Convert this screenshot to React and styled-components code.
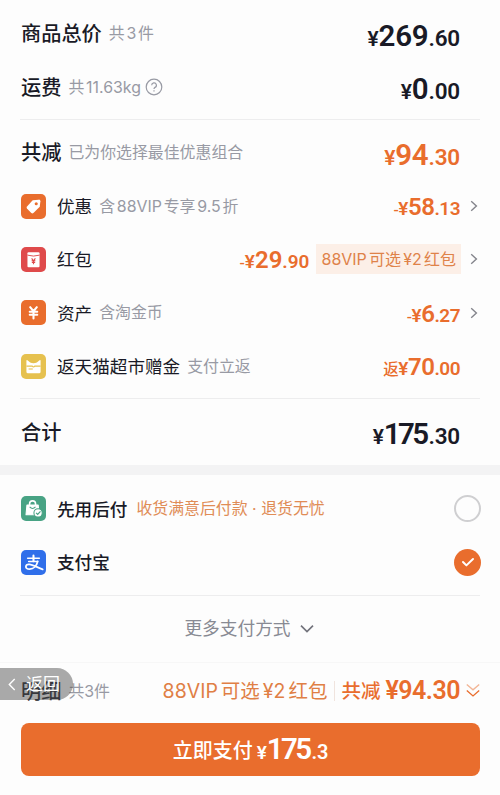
import styled, { createGlobalStyle } from 'styled-components';

const orange = '#e96d2d';
const ink = '#191a26';
const muted = '#989aa4';

const Money = ({ prefix, symbol = '¥', int, dec, ...rest }) => (
  <Price {...rest}>
    {prefix && <Prefix>{prefix}</Prefix>}
    <Yen>{symbol}</Yen>
    <Int>{int}</Int>
    <Dec>.{dec}</Dec>
  </Price>
);

const Chevron = () => (
  <ChevronSlot>
    <svg width="8" height="12" viewBox="0 0 8 12" fill="none" stroke="#83848b" strokeWidth="1.4">
      <path d="M1.2 1.3 6.4 6 1.2 10.7" />
    </svg>
  </ChevronSlot>
);

const TagIcon = () => (
  <svg viewBox="0 0 24 24">
    <path
      d="M11.2 6.1 17 5.4Q18.7 5.3 18.6 7L18 12.2 11.9 18.3Q10.9 19.1 9.9 18.2L5.7 14Q4.9 13 5.8 12Z"
      fill="#fff"
    />
    <circle cx="14.6" cy="9.4" r="1.5" fill={orange} />
  </svg>
);

const PacketIcon = () => (
  <svg viewBox="0 0 24 24">
    <rect x="6.2" y="5" width="11.6" height="14.4" rx="1" fill="#fff" />
    <path d="M6.2 7.8Q12 9.6 17.8 7.8" fill="none" stroke="#df4a4b" strokeWidth=".9" />
    <path d="m10.2 11 1.8 2.2 1.8-2.2M10.2 13.2h3.6M10.4 14.8h3.2M12 13v3.6" fill="none" stroke="#df4a4b" strokeWidth="1.1" />
  </svg>
);

const CoinIcon = () => (
  <svg viewBox="0 0 24 24" fill="none" stroke="#fff" strokeWidth="2" strokeLinecap="round">
    <path d="m8.8 6.9 3.2 3.9 3.2-3.9M8.4 11.2h7.2M8.4 14.2h7.2M12 11v6.8" />
  </svg>
);

const CatCardIcon = () => (
  <svg viewBox="0 0 24 24">
    <path
      d="M5.2 6.3Q5.3 5.4 6.2 5.9L8.8 8.2Q12 9.4 15.2 8.2L17.8 5.9Q18.7 5.4 18.8 6.3V17Q18.8 18.5 17.3 18.5H6.7Q5.2 18.5 5.2 17Z"
      fill="#fff"
    />
    <path d="M5.2 11.6h5.6q1.2 1.4 2.4 0h5.6" fill="none" stroke="#e6c14f" strokeWidth="1.1" />
    <path d="M7.3 14.4h4" stroke="#e6c14f" strokeWidth="1" />
  </svg>
);

const BagIcon = () => (
  <svg viewBox="0 0 24 24" fill="none">
    <path d="M8.2 9.5V7.6a2.9 2.9 0 0 1 5.8 0v1.9" stroke="#fff" strokeWidth="1.5" />
    <path d="M5.7 8.6h10.8l1 9.4H4.8Z" fill="#fff" stroke="#fff" strokeLinejoin="round" />
    <path d="M8.3 10.4q2.8 3 5.6 0" stroke="#48a384" strokeWidth="1" />
    <circle cx="16.4" cy="16.2" r="4" fill="#fff" stroke="#48a384" strokeWidth="1" />
    <path d="m14.5 16.2 1.5 1.5 2.7-2.9" stroke="#48a384" strokeWidth="1.2" />
  </svg>
);

const AlipayIcon = () => (
  <svg viewBox="0 0 24 24" fill="none" stroke="#fff" strokeLinecap="round">
    <path d="M6.4 8h11.2M7.4 11h8.6" strokeWidth="1.5" />
    <path d="M12 5.4v5.4" strokeWidth="2" />
    <path
      d="M16 11C15 15.2 12 18.4 8.3 18.4 5.7 18.4 4.6 17.2 4.7 15.9 4.8 14.5 6.2 13.7 8 13.8 11.3 14 15.8 16.9 20.8 18.6"
      strokeWidth="1.7"
    />
  </svg>
);

const discounts = [
  { icon: <TagIcon />, color: orange, name: '优惠', note: '含 88VIP 专享 9.5 折', prefix: '-', int: '58', dec: '13', arrow: true },
  { icon: <PacketIcon />, color: '#df4a4b', name: '红包', prefix: '-', int: '29', dec: '90', badge: '88VIP 可选 ¥2 红包', arrow: true },
  { icon: <CoinIcon />, color: orange, name: '资产', note: '含淘金币', prefix: '-', int: '6', dec: '27', arrow: true },
  { icon: <CatCardIcon />, color: '#e6c14f', name: '返天猫超市赠金', note: '支付立返', prefix: '返', int: '70', dec: '00' }
];

export default () => (
  <>
    <GlobalStyle />
    <Page>
      <Totals>
        <Row>
          <Title>商品总价</Title>
          <Note>共 3 件</Note>
          <Money int="269" dec="60" />
        </Row>
        <Row>
          <Title>运费</Title>
          <Note>共 11.63kg</Note>
          <Help viewBox="0 0 18 18">
            <circle cx="9" cy="9" r="7.8" />
            <path d="M6.7 7.3a2.35 2.35 0 1 1 3.3 2.1q-1 .5-1 1.7M9 12.3v1.2" />
          </Help>
          <Money int="0" dec="00" />
        </Row>
      </Totals>
      <Rule />
      <Savings>
        <Row>
          <Title>共减</Title>
          <Note>已为你选择最佳优惠组合</Note>
          <Money int="94" dec="30" $accent />
        </Row>
        {discounts.map(item => (
          <Row key={item.name}>
            <IconTile $color={item.color}>{item.icon}</IconTile>
            <Name>{item.name}</Name>
            {item.note && <Note>{item.note}</Note>}
            <Money prefix={item.prefix} int={item.int} dec={item.dec} $accent $small $inset={item.badge} />
            {item.badge && <Badge>{item.badge}</Badge>}
            {item.arrow && <Chevron />}
          </Row>
        ))}
      </Savings>
      <Rule />
      <Sum>
        <Title>合计</Title>
        <Money int="175" dec="30" $tight />
      </Sum>
      <Band />
      <Methods>
        <Row>
          <IconTile $color="#48a384">
            <BagIcon />
          </IconTile>
          <Name $strong>先用后付</Name>
          <Note $accent>收货满意后付款 · 退货无忧</Note>
          <Radio />
        </Row>
        <Row>
          <IconTile $color="#306fea">
            <AlipayIcon />
          </IconTile>
          <Name $strong>支付宝</Name>
          <Radio $checked>
            <svg width="14" height="12" viewBox="0 0 14 12" fill="none" stroke="#fff" strokeWidth="2" strokeLinecap="round" strokeLinejoin="round">
              <path d="m2 6 3.4 3.4L12 3" />
            </svg>
          </Radio>
        </Row>
      </Methods>
      <Rule />
      <More>
        更多支付方式
        <svg width="14" height="10" viewBox="0 0 14 10" fill="none" stroke="#72737c" strokeWidth="1.7">
          <path d="m1 1.7 6 5.8 6-5.8" />
        </svg>
      </More>
      <Rule $wide />
      <Footer>
        <Title>明细</Title>
        <Note>共3件</Note>
        <Offer>88VIP 可选 ¥2 红包</Offer>
        <Saved>
          共减<SavedPrice>¥94.30</SavedPrice>
        </Saved>
        <svg width="14" height="16" viewBox="0 0 14 16" fill="none" stroke={orange} strokeWidth="1.3">
          <path d="m.8 1.4 6.2 5.4 6.2-5.4" opacity=".5" />
          <path d="m.8 7.6 6.2 5.4 6.2-5.4" />
        </svg>
        <Back>
          <svg width="8" height="13" viewBox="0 0 8 13" fill="none" stroke="#fff" strokeWidth="1.4">
            <path d="M6.7 1 1.3 6.5 6.7 12" />
          </svg>
          返回
        </Back>
      </Footer>
      <PayButton>
        立即支付
        <Money int="175" dec="3" $inButton />
      </PayButton>
    </Page>
  </>
);

const GlobalStyle = createGlobalStyle`
  body {
    margin: 0;
    background: #fdfdfd;
  }

  * {
    box-sizing: border-box;
  }
`;

const Page = styled.div`
  width: 500px;
  height: 795px;
  overflow: hidden;
  color: ${ink};
  font-family: Inter, 'Noto Sans CJK SC', sans-serif;
  white-space: nowrap;

  svg {
    flex: none;
  }
`;

const Row = styled.div`
  display: flex;
  align-items: center;
  height: 53.4px;
  padding: 0 20px 0 21px;
`;

const Totals = styled.div`
  height: 119px;
  padding-top: 7px;
`;

const Savings = styled.div`
  height: 278px;
  padding-top: 6px;
`;

const Sum = styled(Row)`
  height: 66px;
`;

const Methods = styled.div`
  height: 120px;
  padding-top: 7px;
`;

const Rule = styled.div`
  height: 1px;
  margin: 0 ${props => (props.$wide ? 0 : 20)}px;
  background: ${props => (props.$wide ? '#f7f7f7' : '#ededee')};
`;

const Band = styled.div`
  height: 10px;
  background: #f3f3f4;
`;

const Title = styled.div`
  padding-top: 1px;
  font-size: 20.2px;
  font-weight: 500;
  line-height: 28px;
`;

const Name = styled.div`
  margin-left: 11px;
  padding-top: 2px;
  font-size: 17.6px;
  font-weight: ${props => (props.$strong ? 500 : 400)};
  line-height: 26px;
`;

const Note = styled.div`
  margin-left: ${props => (props.$accent ? 9 : 7)}px;
  padding-top: 1px;
  color: ${props => (props.$accent ? '#e08c56' : muted)};
  font-size: 15.9px;
  line-height: 24px;
  word-spacing: ${props => (props.$accent ? 0 : -2.7)}px;
`;

const Help = styled.svg`
  width: 18px;
  height: 18px;
  margin-left: 4px;
  fill: none;
  stroke: ${muted};
  stroke-width: 1.2;
`;

const IconTile = styled.div`
  display: flex;
  flex: none;
  width: 25px;
  height: 25px;
  border-radius: 5px;
  background: ${props => props.$color};

  svg {
    width: 25px;
    height: 25px;
  }
`;

const Yen = styled.span`
  font-size: 21px;
`;

const Int = styled.span`
  font-size: 29.5px;
`;

const Dec = styled.span`
  font-size: 22.5px;
`;

const Prefix = styled.span`
  font-size: 20px;
`;

const Price = styled.div`
  display: flex;
  align-items: baseline;
  margin-left: auto;
  margin-right: 20px;
  padding-top: 7px;
  color: ${props => (props.$accent ? orange : ink)};
  font-family: Roboto, 'Noto Sans CJK SC', sans-serif;
  font-weight: 600;
  line-height: 34px;
  letter-spacing: -0.2px;

  ${props => props.$tight && `${Int} { letter-spacing: -2.6px; margin-right: 2px; }`}

  ${props =>
    props.$small &&
    `
    padding-top: 5px;
    letter-spacing: -0.5px;

    ${Yen} { font-size: 19px; }
    ${Int} { font-size: 24px; }
    ${Dec} { font-size: 19px; }
    ${Prefix} { font-size: 15.5px; font-weight: 500; }
  `}

  ${props => props.$inset && `margin-right: 7px; letter-spacing: 0;`}

  ${props =>
    props.$inButton &&
    `
    margin: 0 0 0 4px;
    padding: 2px 0 0;
    color: #fff;

    ${Yen} { font-size: 19px; }
    ${Int} { font-size: 29.5px; letter-spacing: -2.6px; margin-right: 2px; }
    ${Dec} { font-size: 20px; }
  `}
`;

const Badge = styled.div`
  height: 30px;
  margin-right: 19px;
  padding: 0 5px;
  background: #fcefe7;
  color: #df8249;
  font-size: 16px;
  line-height: 31px;
  word-spacing: -2.3px;
`;

const ChevronSlot = styled.span`
  display: flex;
  width: 8px;
  margin: 0 2px 0 -10px;
`;

const Radio = styled.div`
  display: flex;
  align-items: center;
  justify-content: center;
  width: 27px;
  height: 27px;
  margin: 0 -1px 0 auto;
  border: ${props => (props.$checked ? 0 : '2px solid #cfcfd1')};
  border-radius: 50%;
  background: ${props => (props.$checked ? orange : 'transparent')};
`;

const More = styled.div`
  display: flex;
  align-items: center;
  justify-content: center;
  gap: 9px;
  height: 66px;
  padding: 0 2px 1px 0;
  color: #888a93;
  font-size: 17.7px;
  line-height: 26px;
`;

const Footer = styled(Row)`
  position: relative;
  height: 60px;
  padding-bottom: 4px;
`;

const Offer = styled.div`
  margin-left: auto;
  padding-right: 7px;
  color: #e07f45;
  font-size: 19.5px;
  line-height: 28px;
  word-spacing: -2.5px;
`;

const Saved = styled.div`
  display: flex;
  align-items: center;
  margin-right: 6px;
  padding-left: 6px;
  border-left: 1px solid #f0e4de;
  color: ${orange};
  font-size: 19.5px;
  font-weight: 500;
  line-height: 20px;
`;

const SavedPrice = styled.span`
  margin-left: 5px;
  font-family: Roboto, sans-serif;
  font-size: 25px;
  font-weight: 600;
  letter-spacing: -0.5px;
`;

const Back = styled.div`
  position: absolute;
  top: 5px;
  left: 0;
  display: flex;
  align-items: center;
  gap: 10px;
  width: 73px;
  height: 32px;
  padding-left: 8px;
  border-radius: 0 16px 16px 0;
  background: rgba(85, 85, 85, 0.5);
  color: #fff;
  font-size: 17px;
  line-height: 24px;
`;

const PayButton = styled.div`
  display: flex;
  align-items: center;
  justify-content: center;
  height: 53px;
  margin: 0 20px 0 21px;
  border-radius: 8px;
  background: ${orange};
  color: #fff;
  font-size: 20px;
  font-weight: 500;
`;
